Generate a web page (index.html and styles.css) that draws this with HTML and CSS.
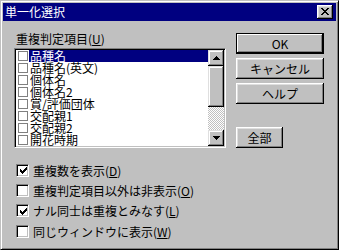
FILE: index.html
```html
<!DOCTYPE html>
<html lang="ja">
<head>
<meta charset="utf-8">
<title>単一化選択</title>
<link rel="stylesheet" href="styles.css">
</head>
<body>
<div class="window">
  <div class="titlebar">
    <span class="title">単一化選択</span>
    <div class="close">
      <svg width="8" height="7" viewBox="0 0 8 7" shape-rendering="crispEdges"><path d="M0 0h2v1H0zM6 0h2v1H6zM1 1h2v1H1zM5 1h2v1H5zM2 2h4v1H2zM3 3h2v1H3zM2 4h4v1H2zM1 5h2v1H1zM5 5h2v1H5zM0 6h2v1H0zM6 6h2v1H6z" fill="#000"/></svg>
    </div>
  </div>
  <div class="content">
    <div class="top">
      <div class="left">
        <div class="label">重複判定項目(<u>U</u>)</div>
        <div class="listbox">
          <ul class="items">
            <li class="item sel"><span class="cb"></span><span class="txt">品種名</span></li>
            <li class="item"><span class="cb"></span><span class="txt">品種名(英文)</span></li>
            <li class="item"><span class="cb"></span><span class="txt">個体名</span></li>
            <li class="item"><span class="cb"></span><span class="txt">個体名2</span></li>
            <li class="item"><span class="cb"></span><span class="txt">賞/評価団体</span></li>
            <li class="item"><span class="cb"></span><span class="txt">交配親1</span></li>
            <li class="item"><span class="cb"></span><span class="txt">交配親2</span></li>
            <li class="item"><span class="cb"></span><span class="txt">開花時期</span></li>
          </ul>
          <div class="scrollbar">
            <div class="sbtn"><svg width="7" height="4" viewBox="0 0 7 4" shape-rendering="crispEdges"><path d="M3 0h1v1h1v1h1v1h1v1H0V3h1V2h1V1h1z" fill="#000"/></svg></div>
            <div class="thumb"></div>
            <div class="track"></div>
            <div class="sbtn"><svg width="7" height="4" viewBox="0 0 7 4" shape-rendering="crispEdges"><path d="M0 0h7v1H6v1H5v1H4v1H3V3H2V2H1V1H0z" fill="#000"/></svg></div>
          </div>
        </div>
      </div>
      <div class="right">
        <button class="btn default">OK</button>
        <button class="btn">キャンセル</button>
        <button class="btn">ヘルプ</button>
        <button class="btn all">全部</button>
      </div>
    </div>
    <div class="checks">
      <div class="check"><span class="box"><svg width="7" height="7" viewBox="0 0 7 7" shape-rendering="crispEdges"><path d="M6 0h1v3H6v1H5v1H4v1H3v1H2V6H1V5H0V2h1v1h1v1h1V3h1V2h1V1h1z" fill="#000"/></svg></span><span>重複数を表示(<u>D</u>)</span></div>
      <div class="check"><span class="box"></span><span>重複判定項目以外は非表示(<u>O</u>)</span></div>
      <div class="check"><span class="box"><svg width="7" height="7" viewBox="0 0 7 7" shape-rendering="crispEdges"><path d="M6 0h1v3H6v1H5v1H4v1H3v1H2V6H1V5H0V2h1v1h1v1h1V3h1V2h1V1h1z" fill="#000"/></svg></span><span>ナル同士は重複とみなす(<u>L</u>)</span></div>
      <div class="check"><span class="box"></span><span>同じウィンドウに表示(<u>W</u>)</span></div>
    </div>
  </div>
</div>
</body>
</html>
```

FILE: styles.css
```css
html, body {
  margin: 0;
  padding: 0;
  background: #c0c0c0;
}
body {
  font-family: "Noto Sans CJK JP", "Noto Sans", sans-serif;
  font-size: 12px;
  color: #000;
}
.window {
  width: 339px;
  height: 250px;
  box-sizing: border-box;
  background: #c0c0c0;
  border: 1px solid;
  border-color: #c0c0c0 #000 #000 #c0c0c0;
  box-shadow: inset 1px 1px #fff, inset -1px -1px #808080;
  padding: 2px;
  display: flex;
  flex-direction: column;
}
.titlebar {
  height: 18px;
  flex: none;
  background: #000080;
  color: #fff;
  display: flex;
  align-items: center;
  justify-content: space-between;
  padding: 0 3px 0 2px;
}
.title {
  line-height: 18px;
}
.close {
  width: 16px;
  height: 14px;
  background: #c0c0c0;
  box-shadow: inset -1px -1px #000, inset 1px 1px #fff, inset -2px -2px #808080, inset 2px 2px #dfdfdf;
  display: flex;
  align-items: center;
  justify-content: center;
}
.close svg {
  margin: 0 1px 1px 0;
}
.content {
  flex: 1;
  padding: 12px 0 0 11px;
}
.top {
  display: flex;
  gap: 10px;
}
.left {
  width: 212px;
}
.label {
  line-height: 14px;
  margin: -1px 0 2px 2px;
}
.listbox {
  height: 100px;
  box-sizing: border-box;
  display: flex;
  background: #fff;
  border: 1px solid;
  border-color: #808080 #fff #fff #808080;
  box-shadow: inset 1px 1px #000, inset -1px -1px #c0c0c0;
  padding: 1px;
}
.items {
  list-style: none;
  margin: 0;
  padding: 0;
  flex: 1;
  overflow: hidden;
}
.item {
  height: 12px;
  display: flex;
  align-items: center;
  line-height: 12px;
  white-space: nowrap;
}
.cb {
  width: 10px;
  height: 10px;
  box-sizing: border-box;
  border: 1px solid #808080;
  background: #fff;
  margin: 0 1px 0 2px;
  flex: none;
}
.txt {
  flex: 1;
  height: 12px;
  padding-left: 1px;
}
.sel .txt {
  background: #000080;
  color: #fff;
}
.scrollbar {
  width: 16px;
  display: flex;
  flex-direction: column;
}
.sbtn, .thumb {
  background: #c0c0c0;
  box-shadow: inset -1px -1px #000, inset 1px 1px #dfdfdf, inset -2px -2px #808080, inset 2px 2px #fff;
}
.sbtn {
  height: 16px;
  display: flex;
  align-items: center;
  justify-content: center;
}
.thumb {
  height: 41px;
}
.track {
  flex: 1;
  background: repeating-conic-gradient(#c0c0c0 0 25%, #fff 0 50%) 0 0 / 2px 2px;
}
.right {
  display: flex;
  flex-direction: column;
}
.btn {
  width: 88px;
  height: 21px;
  margin: 0 0 4px 0;
  padding: 0;
  border: 0;
  font: inherit;
  color: #000;
  background: #c0c0c0;
  box-shadow: inset -1px -1px #000, inset 1px 1px #fff, inset -2px -2px #808080, inset 2px 2px #dfdfdf;
}
.btn.default {
  box-shadow: inset 0 0 0 1px #000, inset -2px -2px #000, inset 2px 2px #fff, inset -3px -3px #808080;
}
.btn.all {
  width: 47px;
  margin-top: 19px;
}
.checks {
  margin-top: 8px;
}
.check {
  height: 20.33px;
  display: flex;
  align-items: center;
  padding-left: 2px;
  white-space: nowrap;
}
.box {
  width: 13px;
  height: 13px;
  box-sizing: border-box;
  background: #fff;
  border: 1px solid;
  border-color: #808080 #fff #fff #808080;
  box-shadow: inset 1px 1px #000, inset -1px -1px #c0c0c0;
  margin-right: 4px;
  display: flex;
  align-items: center;
  justify-content: center;
  flex: none;
}
.box svg {
  margin: 1px 0 0 1px;
}
```
